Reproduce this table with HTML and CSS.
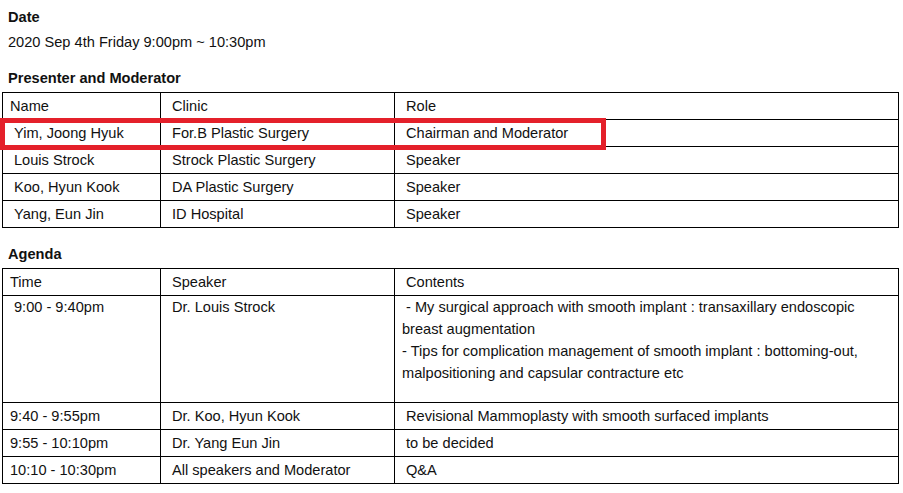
FILE: index.html
```html
<!DOCTYPE html>
<html>
<head>
<meta charset="utf-8">
<link rel="stylesheet" href="styles.css">
</head>
<body>
<div class="page">
  <div class="label label-first">Date</div>
  <div class="date">2020 Sep 4th Friday 9:00pm ~ 10:30pm</div>

  <div class="label label-sec">Presenter and Moderator</div>
  <div class="table-wrap">
    <table class="grid">
      <colgroup><col class="c1"><col class="c2"><col class="c3"></colgroup>
      <tr><td>Name</td><td class="ind">Clinic</td><td class="ind">Role</td></tr>
      <tr><td class="ind">Yim, Joong Hyuk</td><td class="ind">For.B Plastic Surgery</td><td class="ind">Chairman and Moderator</td></tr>
      <tr><td class="ind">Louis Strock</td><td class="ind">Strock Plastic Surgery</td><td class="ind">Speaker</td></tr>
      <tr><td class="ind">Koo, Hyun Kook</td><td class="ind">DA Plastic Surgery</td><td class="ind">Speaker</td></tr>
      <tr><td class="ind">Yang, Eun Jin</td><td class="ind">ID Hospital</td><td class="ind">Speaker</td></tr>
    </table>
    <div class="highlight"></div>
  </div>

  <div class="label label-agenda">Agenda</div>
  <div class="table-wrap">
    <table class="grid">
      <colgroup><col class="c1"><col class="c2"><col class="c3"></colgroup>
      <tr><td>Time</td><td class="ind">Speaker</td><td class="ind">Contents</td></tr>
      <tr class="tall"><td class="ind">9:00 - 9:40pm</td><td class="ind">Dr. Louis Strock</td><td><span class="sp">- My surgical approach with smooth implant : transaxillary endoscopic</span><br>breast augmentation<br>- Tips for complication management of smooth implant : bottoming-out,<br>malpositioning and capsular contracture etc</td></tr>
      <tr><td>9:40 - 9:55pm</td><td class="ind">Dr. Koo, Hyun Kook</td><td class="ind">Revisional Mammoplasty with smooth surfaced implants</td></tr>
      <tr><td>9:55 - 10:10pm</td><td class="ind">Dr. Yang Eun Jin</td><td class="ind">to be decided</td></tr>
      <tr><td>10:10 - 10:30pm</td><td class="ind">All speakers and Moderator</td><td class="ind">Q&amp;A</td></tr>
    </table>
  </div>
</div>
</body>
</html>
```

FILE: styles.css
```css
html, body {
  margin: 0;
  padding: 0;
  background: #ffffff;
}

body {
  font-family: "Liberation Sans", Arial, sans-serif;
  font-size: 14.6px;
  color: #111111;
}

.page {
  width: 903px;
  padding-left: 8px;
  box-sizing: border-box;
}

.label {
  font-weight: bold;
  line-height: 18px;
}

.label-first { padding-top: 8px; }

.date {
  line-height: 18px;
  margin-top: 7px;
}

.label-sec { margin-top: 18px; }

.label-agenda { margin-top: 17px; }

.table-wrap {
  position: relative;
  margin-top: 5px;
  margin-left: -6px;
  width: 896px;
}

.grid {
  border-collapse: collapse;
  table-layout: fixed;
  width: 896px;
}

.c1 { width: 158px; }
.c2 { width: 234px; }
.c3 { width: 504px; }

.grid td {
  border: 1px solid #000000;
  padding: 0 0 0 7px;
  height: 26px;
  line-height: 26px;
  vertical-align: middle;
  white-space: nowrap;
  overflow: hidden;
}

.grid td.ind { padding-left: 11px; }

.sp { padding-left: 4px; }

.grid tr.tall td {
  height: 106px;
  line-height: 22px;
  vertical-align: top;
}

.highlight {
  position: absolute;
  left: -2px;
  top: 26px;
  width: 596px;
  height: 22px;
  border: 5px solid #e4202a;
}
```
